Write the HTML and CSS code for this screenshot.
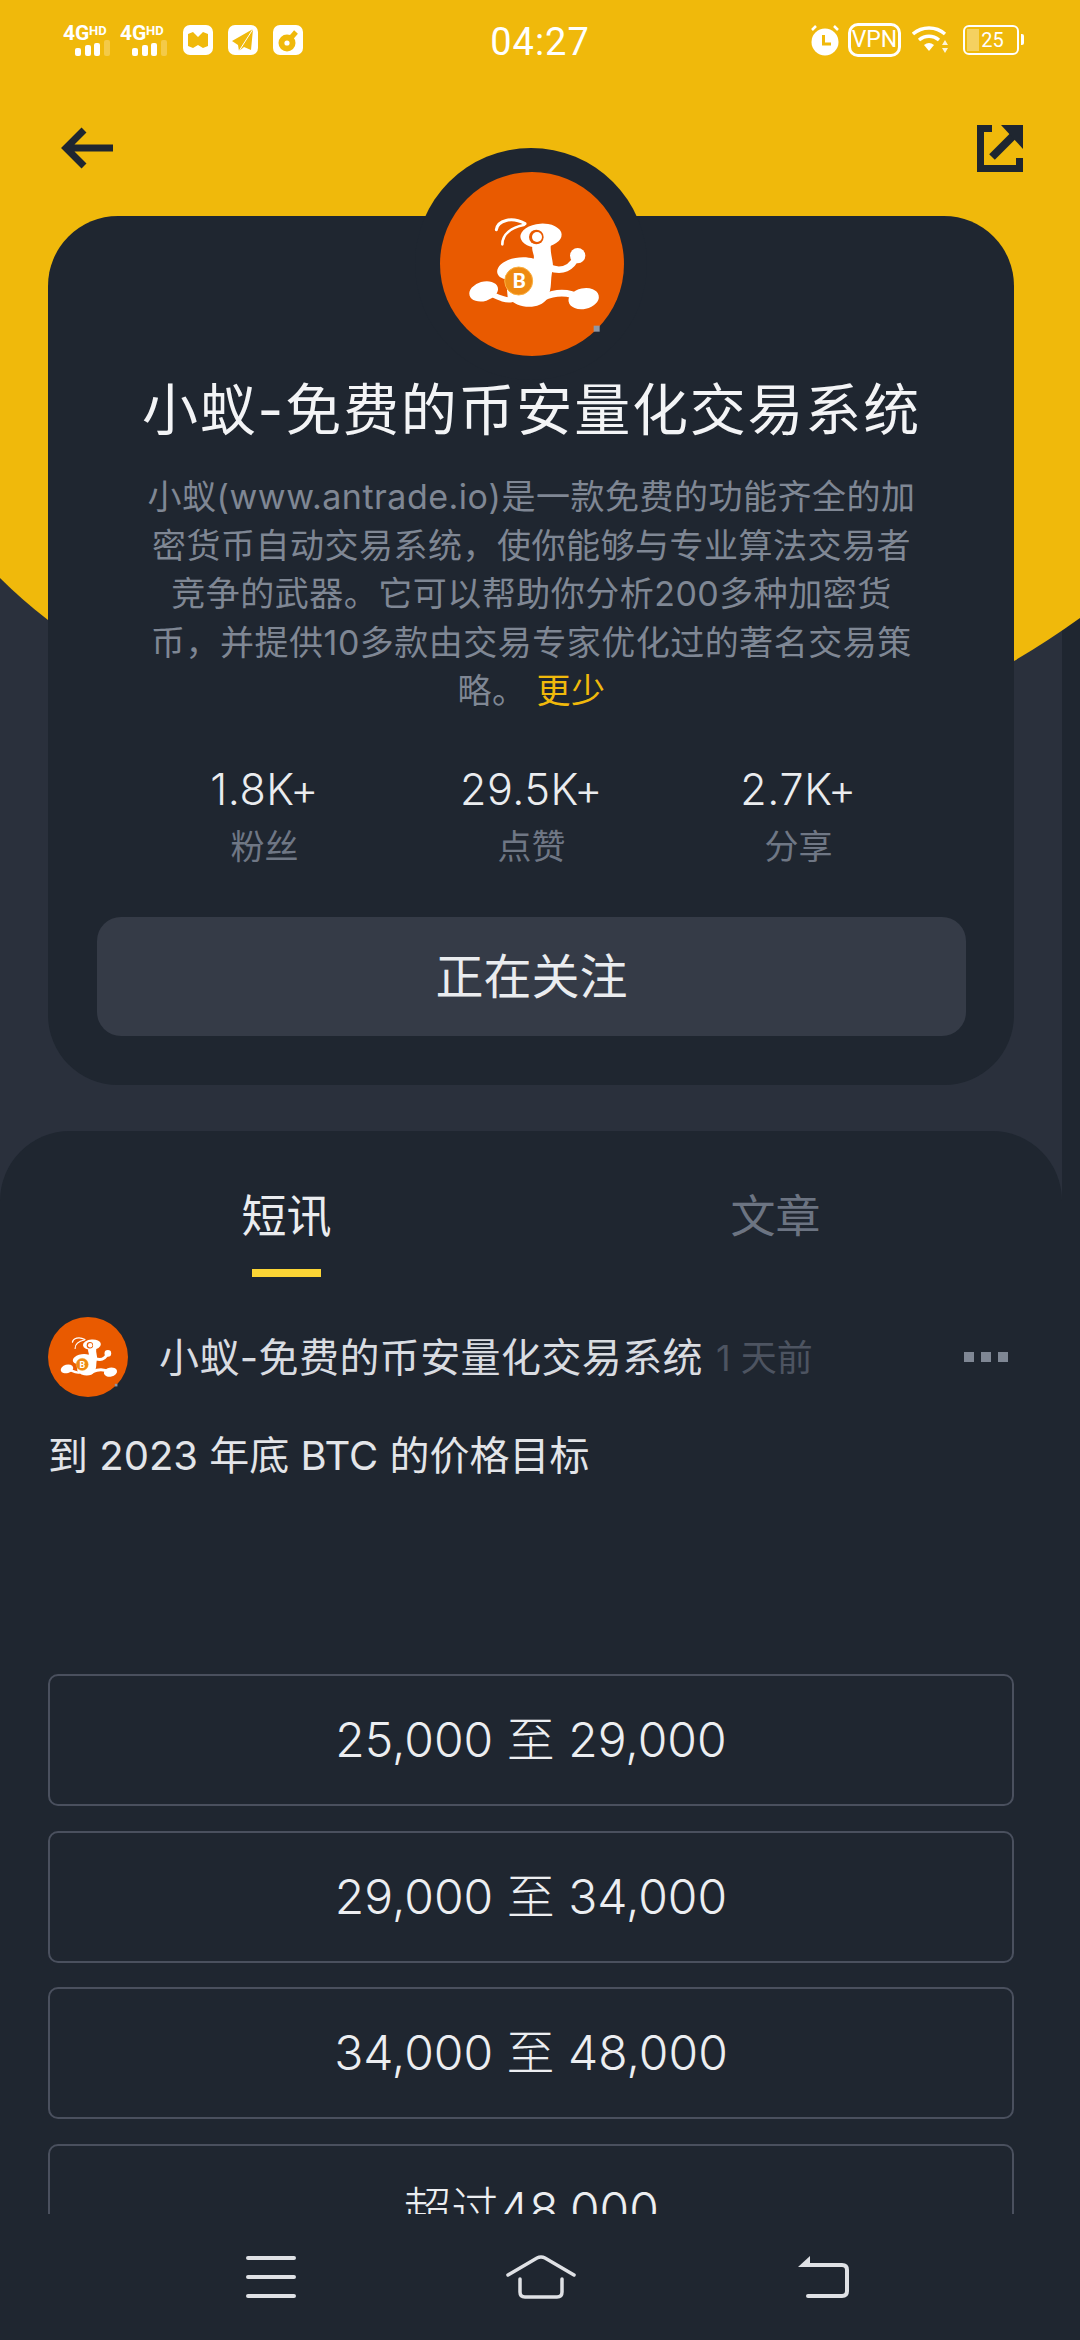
FILE: index.html
```html
<!DOCTYPE html>
<html lang="zh-CN">
<head>
    <meta charset="UTF-8">
    <meta name="viewport" content="width=device-width, initial-scale=1.0">
    <title>小蚁-免费的币安量化交易系统</title>
    <link rel="stylesheet" href="styles.css">
</head>
<body>
    <svg class="defs" width="0" height="0">
        <defs>
            <g id="ant-art">
                <circle cx="453" cy="401" r="276" fill="#e95a00"/>
                <rect x="638" y="586" width="18" height="18" fill="#8f96a3"/>
                <g fill="none" stroke="#fff" stroke-linecap="round">
                    <path d="M364 342C364 312 390 292 428 284" stroke-width="8"/>
                    <path d="M346 298C350 270 392 258 432 280" stroke-width="9"/>
                    <path d="M505 412C545 428 572 412 588 378" stroke-width="20"/>
                    <path d="M315 485C345 496 365 512 392 508" stroke-width="16"/>
                    <path d="M485 502C525 484 565 484 600 505" stroke-width="20"/>
                </g>
                <g fill="#fff">
                    <ellipse cx="480" cy="316" rx="62" ry="36" transform="rotate(-4 480 316)"/>
                    <path d="M456 340C448 360 462 372 458 385C430 376 385 380 360 402C338 422 350 444 375 447L380 500C405 536 476 540 498 505C516 470 506 450 515 420C520 395 505 370 510 340Z"/>
                    <circle cx="590" cy="376" r="23"/>
                    <ellipse cx="308" cy="483" rx="44" ry="29" transform="rotate(-16 308 483)"/>
                    <ellipse cx="608" cy="505" rx="46" ry="31" transform="rotate(-12 608 505)"/>
                </g>
                <circle cx="466" cy="320" r="22" fill="#e95a00"/>
                <circle cx="468" cy="320" r="15" fill="#fff"/>
                <circle cx="413" cy="452" r="42" fill="#ee8a12" stroke="#fbb040" stroke-width="3"/>
            </g>
            <g id="net-bars" fill="#fff">
                <rect x="12" y="26" width="6" height="8" rx="2"/>
                <rect x="22" y="23" width="6" height="11" rx="2"/>
                <rect x="31" y="21" width="6" height="13" rx="2"/>
                <rect x="41" y="18" width="6" height="16" rx="2" opacity=".25"/>
            </g>
        </defs>
    </svg>

    <div class="app">
        <div class="scroll">
            <div class="backdrop">
                <svg class="backdrop-yellow" viewBox="0 0 1080 670" width="1080" height="670">
                    <path d="M0 0H1080V618Q1048 641 1014 661L48 620Q22 600 0 578Z" fill="#f0b90b"/>
                </svg>
            </div>

            <div class="status-bar">
                <div class="status-left">
                    <svg class="net-icon" viewBox="0 0 47 36">
                        <text x="0" y="18" class="net-big">4G</text>
                        <text x="26" y="13" class="net-small">HD</text>
                        <use href="#net-bars"/>
                    </svg>
                    <svg class="net-icon" viewBox="0 0 47 36">
                        <text x="0" y="18" class="net-big">4G</text>
                        <text x="26" y="13" class="net-small">HD</text>
                        <use href="#net-bars"/>
                    </svg>
                    <svg class="app-icon first" viewBox="0 0 30 30">
                        <rect width="30" height="30" rx="7" fill="#fff"/>
                        <path d="M5 9L10 7L15 12L20 7L25 9V21L20 23L15 20L10 23L5 21Z" fill="#f0b90b"/>
                    </svg>
                    <svg class="app-icon" viewBox="0 0 30 30">
                        <rect width="30" height="30" rx="7" fill="#fff"/>
                        <path d="M25 4L4 16L10 20L11 26L16 22L23 25Z" fill="#f0b90b"/>
                        <path d="M25 4L11 26" stroke="#fff" stroke-width="1"/>
                    </svg>
                    <svg class="app-icon" viewBox="0 0 30 30">
                        <rect width="30" height="30" rx="7" fill="#fff"/>
                        <circle cx="14" cy="18" r="8.5" fill="#f0b90b"/>
                        <path d="M17 14L23 7" stroke="#f0b90b" stroke-width="5"/>
                        <circle cx="14" cy="18" r="2.6" fill="#fff"/>
                    </svg>
                </div>
                <div class="status-time">04:27</div>
                <div class="status-right">
                    <svg class="alarm-icon" viewBox="0 0 30 32">
                        <circle cx="15" cy="18" r="13.5" fill="#fff"/>
                        <path d="M13.5 11V20H21" fill="none" stroke="#f0b90b" stroke-width="3"/>
                        <path d="M2 6L6 2M28 6L24 2" stroke="#fff" stroke-width="2.5"/>
                    </svg>
                    <span class="vpn-badge">VPN</span>
                    <svg class="wifi-icon" viewBox="0 0 39 30">
                        <g fill="none" stroke="#fff" stroke-width="3.4">
                            <path d="M1 9C10 1 24 1 33 9"/>
                            <path d="M7 15C13 10 21 10 27 15"/>
                        </g>
                        <path d="M12 20Q17 16 22 20L17 26Z" fill="#fff"/>
                        <path d="M33 15L36 20H30Z M30 23H36L33 28Z" fill="#fff" opacity=".85"/>
                    </svg>
                    <span class="battery"><span class="battery-fill"></span><span class="battery-text">25</span></span>
                </div>
            </div>

            <div class="topbar">
                <svg class="back-icon" viewBox="0 0 52 42">
                    <path d="M52 21H6M23 3L5 21L23 39" fill="none" stroke="#1f2630" stroke-width="7"/>
                </svg>
                <svg class="share-icon" viewBox="0 0 46 47">
                    <path d="M15 3.500H3.500V43.500H42.500V33" fill="none" stroke="#1f2630" stroke-width="7"/>
                    <path d="M15 32L36 11" stroke="#1f2630" stroke-width="8"/>
                    <path d="M24 0H46V24Z" fill="#1f2630"/>
                </svg>
            </div>

            <section class="profile-card">
                <svg class="profile-avatar" viewBox="177 125 552 552">
                    <use href="#ant-art"/>
                    <text x="415" y="474" class="coin-text">B</text>
                </svg>
                <h1 class="profile-title">小蚁-免费的币安量化交易系统</h1>
                <p class="profile-desc">小蚁(www.antrade.io)是一款免费的功能齐全的加<br>密货币自动交易系统，使你能够与专业算法交易者<br>竞争的武器。它可以帮助你分析200多种加密货<br>币，并提供10多款由交易专家优化过的著名交易策<br>略。 <span class="less-link">更少</span></p>
                <div class="stats">
                    <div class="stat"><div class="stat-value">1.8K+</div><div class="stat-label">粉丝</div></div>
                    <div class="stat"><div class="stat-value">29.5K+</div><div class="stat-label">点赞</div></div>
                    <div class="stat"><div class="stat-value">2.7K+</div><div class="stat-label">分享</div></div>
                </div>
                <div class="follow-btn">正在关注</div>
            </section>

            <section class="panel">
                <div class="tabs">
                    <div class="tab active"><span>短讯</span><i class="tab-line"></i></div>
                    <div class="tab"><span>文章</span></div>
                </div>
                <div class="post">
                    <div class="post-head">
                        <svg class="post-avatar" viewBox="177 125 552 552">
                            <use href="#ant-art"/>
                            <text x="415" y="474" class="coin-text">B</text>
                        </svg>
                        <span class="post-name">小蚁-免费的币安量化交易系统</span>
                        <span class="post-time">1 天前</span>
                        <span class="post-more"><i></i><i></i><i></i></span>
                    </div>
                    <p class="post-text">到 2023 年底 BTC 的价格目标</p>
                    <div class="options">
                        <div class="option">25,000 至 29,000</div>
                        <div class="option">29,000 至 34,000</div>
                        <div class="option">34,000 至 48,000</div>
                        <div class="option">超过48,000</div>
                    </div>
                </div>
            </section>
        </div>

        <div class="nav-bar">
            <svg class="nav-menu" viewBox="0 0 50 42">
                <path d="M2 2H48M2 21H48M2 40H48" stroke="#dfe1e5" stroke-width="4" stroke-linecap="round"/>
            </svg>
            <svg class="nav-home" viewBox="0 0 70 44">
                <path d="M2 20L31 3Q35 1 39 3L68 20" fill="none" stroke="#dfe1e5" stroke-width="3.500" stroke-linecap="round"/>
                <path d="M14 24V37Q14 42 19 42H51Q56 42 56 37V24" fill="none" stroke="#dfe1e5" stroke-width="3.500" stroke-linecap="round"/>
            </svg>
            <svg class="nav-back" viewBox="0 0 51 42">
                <path d="M8 9H44Q49 9 49 14V35Q49 40 44 40H10" fill="none" stroke="#dfe1e5" stroke-width="4" stroke-linecap="round"/>
                <path d="M12 0V11H0Z" fill="#dfe1e5"/>
            </svg>
        </div>
    </div>
</body>
</html>
```

FILE: styles.css
```css
/* Grundlayout */
* {
    box-sizing: border-box;
}
html, body {
    margin: 0;
    padding: 0;
    background-color: #1f2630;
}
body {
    font-family: Inter, "Noto Sans CJK SC", sans-serif;
    color: #eaecef;
}
.defs {
    position: absolute;
}
.coin-text {
    font: 700 62px Roboto, sans-serif;
    fill: #fff;
    text-anchor: middle;
}
.net-big {
    font: 700 21px Roboto, sans-serif;
    fill: #fff;
}
.net-small {
    font: 700 13px Roboto, sans-serif;
    fill: #fff;
}

.app {
    width: 1080px;
    height: 2340px;
    display: flex;
    flex-direction: column;
    overflow: hidden;
}
.scroll {
    position: relative;
    height: 2214px;
    overflow: hidden;
    flex: none;
}

/* Hintergrund oben */
.backdrop {
    position: absolute;
    top: 0;
    left: 0;
    width: 1062px;
    height: 1260px;
    background-color: #2a303c;
}
.backdrop-yellow {
    position: absolute;
    top: 0;
    left: 0;
    display: block;
}

/* Statusleiste */
.status-bar {
    position: relative;
    height: 80px;
    display: grid;
    grid-template-columns: 1fr auto 1fr;
    align-items: center;
    color: #fff;
    font-family: Roboto, sans-serif;
}
.status-left {
    display: flex;
    align-items: center;
    gap: 10px;
    padding-left: 63px;
}
.net-icon {
    width: 47px;
    height: 36px;
}
.app-icon {
    width: 30px;
    height: 30px;
    margin-left: 5px;
}
.app-icon.first {
    margin-left: 6px;
}
.status-time {
    padding-top: 3px;
    font-size: 38px;
    letter-spacing: 1px;
    text-align: center;
}
.status-right {
    display: flex;
    align-items: center;
    justify-content: flex-end;
    padding-right: 61px;
    gap: 8px;
}
.alarm-icon {
    width: 30px;
    height: 32px;
}
.vpn-badge {
    width: 53px;
    height: 34px;
    border: 3px solid #fff;
    border-radius: 10px;
    font-size: 23px;
    line-height: 28px;
    text-align: center;
}
.wifi-icon {
    width: 39px;
    height: 30px;
    margin-left: 3px;
}
.battery {
    position: relative;
    width: 56px;
    height: 30px;
    margin-left: 4px;
    border: 2.5px solid #fff;
    border-radius: 6px;
    display: flex;
    align-items: center;
    justify-content: center;
}
.battery:after {
    content: "";
    position: absolute;
    right: -7px;
    top: 7px;
    width: 3px;
    height: 11px;
    background-color: #fff;
    border-radius: 0 2px 2px 0;
}
.battery-fill {
    position: absolute;
    left: 2px;
    top: 2px;
    bottom: 2px;
    width: 12px;
    background-color: rgba(255, 255, 255, 0.35);
}
.battery-text {
    position: relative;
    font-size: 20px;
    line-height: 1;
    padding-left: 3px;
}

/* Kopfzeile mit Zurueck und Teilen */
.topbar {
    position: relative;
    height: 136px;
    display: flex;
    align-items: center;
    justify-content: space-between;
    padding: 0 57px 0 61px;
}
.back-icon {
    width: 52px;
    height: 42px;
}
.share-icon {
    width: 46px;
    height: 47px;
}

/* Profilkarte */
.profile-card {
    position: relative;
    width: 966px;
    height: 869px;
    margin: 0 48px;
    padding: 0 48px 49px 49px;
    background-color: #1f2630;
    border-radius: 70px;
    display: flex;
    flex-direction: column;
    align-items: center;
}
.profile-card:before {
    content: "";
    position: absolute;
    top: -68px;
    left: 367px;
    width: 232px;
    height: 232px;
    border-radius: 50%;
    background-color: #1f2630;
}
.profile-avatar {
    position: relative;
    flex: none;
    width: 184px;
    height: 184px;
    margin-top: -44px;
}
.profile-title {
    margin: 19px 0 0;
    font-size: 56px;
    line-height: 70px;
    font-weight: 400;
    letter-spacing: 1.8px;
    white-space: nowrap;
    color: #f3f4f6;
}
.profile-desc {
    margin: 28px 0 0;
    font-size: 34px;
    line-height: 48.5px;
    letter-spacing: 0.5px;
    text-align: center;
    white-space: nowrap;
    color: #7f8794;
}
.less-link {
    color: #f0b90b;
}
.stats {
    display: grid;
    grid-template-columns: repeat(3, 267px);
    margin-top: 48px;
    text-align: center;
}
.stat-value {
    font-size: 43px;
    font-weight: 300;
    letter-spacing: 0.6px;
    line-height: 50px;
    color: #eaecef;
}
.stat-label {
    margin-top: 9px;
    font-size: 34px;
    line-height: 48px;
    color: #6f7785;
}
.follow-btn {
    align-self: stretch;
    height: 119px;
    margin-top: 46px;
    background-color: #353b47;
    border-radius: 24px;
    font-size: 48px;
    line-height: 119px;
    text-align: center;
    color: #eaecef;
}

/* Untere Tafel */
.panel {
    position: relative;
    width: 1062px;
    height: 1083px;
    margin-top: 46px;
    background-color: #1f2630;
    border-radius: 70px 70px 0 0;
}
.tabs {
    display: grid;
    grid-template-columns: 489px 489px;
    justify-content: center;
    padding-top: 56px;
    height: 146px;
    text-align: center;
}
.tab {
    display: flex;
    flex-direction: column;
    align-items: center;
    font-size: 45px;
    line-height: 60px;
    color: #6c7482;
}
.tab.active {
    color: #eaecef;
}
.tab-line {
    width: 69px;
    height: 8px;
    margin-top: 22px;
    background-color: #fcd535;
}

/* Beitrag */
.post {
    padding: 40px 48px 0;
}
.post-head {
    display: flex;
    align-items: center;
    height: 80px;
}
.post-avatar {
    width: 80px;
    height: 80px;
    flex: none;
}
.post-name {
    margin: 0 0 5px 31px;
    font-size: 40px;
    letter-spacing: 0.4px;
    white-space: nowrap;
    color: #d9dce1;
}
.post-time {
    margin: 0 0 5px 13px;
    font-size: 36px;
    white-space: nowrap;
    color: #4d5461;
}
.post-more {
    display: flex;
    gap: 7px;
    margin-left: auto;
    margin-right: 6px;
}
.post-more i {
    width: 10px;
    height: 10px;
    background-color: #7f8794;
}
.post-text {
    margin: 31px 0 0;
    font-size: 40px;
    line-height: 56px;
    color: #e3e5e9;
}
.options {
    display: flex;
    flex-direction: column;
    gap: 24.5px;
    margin-top: 190px;
}
.option {
    height: 132px;
    flex: none;
    border: 2px solid #4a505e;
    border-radius: 10px;
    font-size: 48px;
    font-weight: 300;
    line-height: 128px;
    text-align: center;
    color: #eceef1;
}

/* Navigationsleiste */
.nav-bar {
    flex: none;
    height: 126px;
    display: flex;
    align-items: center;
    padding-left: 246px;
}
.nav-menu {
    width: 50px;
    height: 42px;
}
.nav-home {
    width: 70px;
    height: 44px;
    margin-left: 210px;
}
.nav-back {
    width: 51px;
    height: 42px;
    margin-left: 222px;
}
```
